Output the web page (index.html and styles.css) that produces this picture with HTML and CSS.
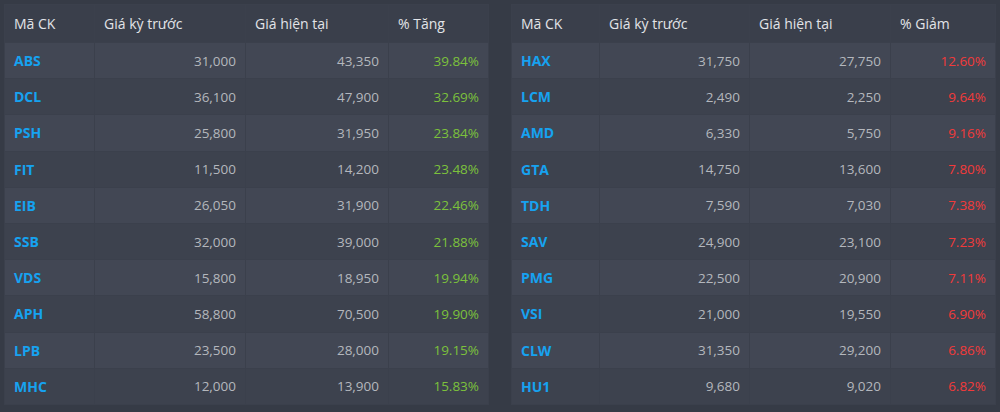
FILE: index.html
```html
<!DOCTYPE html>
<html lang="vi">
<head>
<meta charset="utf-8">
<link rel="stylesheet" href="styles.css">
</head>
<body>
<div class="wrap">
  <table class="tbl tbl-up">
    <colgroup><col class="c1"><col class="c2"><col class="c3"><col class="c4"></colgroup>
    <thead><tr><th>Mã CK</th><th>Giá kỳ trước</th><th>Giá hiện tại</th><th>% Tăng</th></tr></thead>
    <tbody>
      <tr><td class="sym">ABS</td><td class="num">31,000</td><td class="num">43,350</td><td class="pct up">39.84%</td></tr>
      <tr><td class="sym">DCL</td><td class="num">36,100</td><td class="num">47,900</td><td class="pct up">32.69%</td></tr>
      <tr><td class="sym">PSH</td><td class="num">25,800</td><td class="num">31,950</td><td class="pct up">23.84%</td></tr>
      <tr><td class="sym">FIT</td><td class="num">11,500</td><td class="num">14,200</td><td class="pct up">23.48%</td></tr>
      <tr><td class="sym">EIB</td><td class="num">26,050</td><td class="num">31,900</td><td class="pct up">22.46%</td></tr>
      <tr><td class="sym">SSB</td><td class="num">32,000</td><td class="num">39,000</td><td class="pct up">21.88%</td></tr>
      <tr><td class="sym">VDS</td><td class="num">15,800</td><td class="num">18,950</td><td class="pct up">19.94%</td></tr>
      <tr><td class="sym">APH</td><td class="num">58,800</td><td class="num">70,500</td><td class="pct up">19.90%</td></tr>
      <tr><td class="sym">LPB</td><td class="num">23,500</td><td class="num">28,000</td><td class="pct up">19.15%</td></tr>
      <tr><td class="sym">MHC</td><td class="num">12,000</td><td class="num">13,900</td><td class="pct up">15.83%</td></tr>
    </tbody>
  </table>
  <table class="tbl tbl-down">
    <colgroup><col class="d1"><col class="d2"><col class="d3"><col class="d4"></colgroup>
    <thead><tr><th>Mã CK</th><th>Giá kỳ trước</th><th>Giá hiện tại</th><th>% Giảm</th></tr></thead>
    <tbody>
      <tr><td class="sym">HAX</td><td class="num">31,750</td><td class="num">27,750</td><td class="pct down">12.60%</td></tr>
      <tr><td class="sym">LCM</td><td class="num">2,490</td><td class="num">2,250</td><td class="pct down">9.64%</td></tr>
      <tr><td class="sym">AMD</td><td class="num">6,330</td><td class="num">5,750</td><td class="pct down">9.16%</td></tr>
      <tr><td class="sym">GTA</td><td class="num">14,750</td><td class="num">13,600</td><td class="pct down">7.80%</td></tr>
      <tr><td class="sym">TDH</td><td class="num">7,590</td><td class="num">7,030</td><td class="pct down">7.38%</td></tr>
      <tr><td class="sym">SAV</td><td class="num">24,900</td><td class="num">23,100</td><td class="pct down">7.23%</td></tr>
      <tr><td class="sym">PMG</td><td class="num">22,500</td><td class="num">20,900</td><td class="pct down">7.11%</td></tr>
      <tr><td class="sym">VSI</td><td class="num">21,000</td><td class="num">19,550</td><td class="pct down">6.90%</td></tr>
      <tr><td class="sym">CLW</td><td class="num">31,350</td><td class="num">29,200</td><td class="pct down">6.86%</td></tr>
      <tr><td class="sym">HU1</td><td class="num">9,680</td><td class="num">9,020</td><td class="pct down">6.82%</td></tr>
    </tbody>
  </table>
</div>
</body>
</html>
```
FILE: styles.css
```css
html, body {
  margin: 0;
  padding: 0;
  background: #363b46;
  font-family: "Open Sans", "Liberation Sans", sans-serif;
  font-size: 13.5px;
}
.wrap {
  display: flex;
  gap: 22px;
  padding: 4px 6px 0 4px;
}
.tbl {
  width: 484px;
  border-collapse: collapse;
  table-layout: fixed;
}
.c1 { width: 90px; }
.c2 { width: 151px; }
.c3 { width: 143px; }
.c4 { width: 100px; }
.d1 { width: 88px; }
.d2 { width: 150px; }
.d3 { width: 141px; }
.d4 { width: 105px; }
.tbl th, .tbl td {
  border: 1px solid #3b404c;
  padding: 0 9px;
}
.tbl th {
  height: 37px;
  background: #3a3f4b;
  color: #e2e4e8;
  font-weight: 400;
  text-align: left;
  vertical-align: middle;
  font-size: 14px;
}
.tbl td {
  height: 35.2px;
  vertical-align: middle;
}
.tbl tbody tr:nth-child(odd) td { background: #424754; }
.tbl tbody tr:nth-child(even) td { background: #3d424e; }
.sym {
  color: #16a2f0;
  font-weight: 700;
  font-size: 14px;
}
.num, .pct { text-align: right; color: #b4b7bd; }
.pct.up { color: #7cc13c; }
.pct.down { color: #f23a3a; }
```
